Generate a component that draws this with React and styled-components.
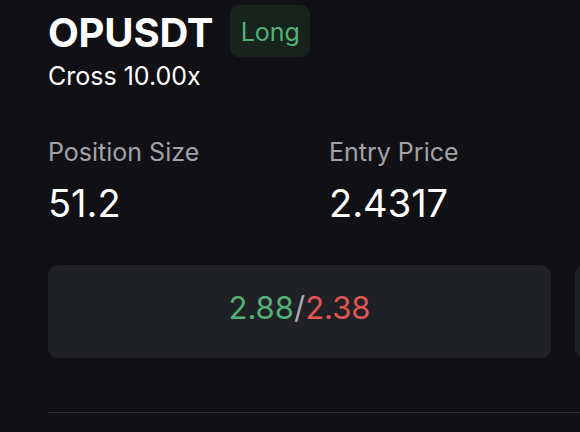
import React from "react"
import styled, { createGlobalStyle } from "styled-components"

const GlobalStyle = createGlobalStyle`
  html, body {
    margin: 0;
    padding: 0;
    background: #111115;
    overflow: hidden;
  }
  body {
    font-family: "Inter", "Noto Sans", sans-serif;
    color: #ffffff;
  }
`

const Page = styled.div`
  width: 580px;
  height: 432px;
  padding: 5px 0 0 48px;
  box-sizing: border-box;
  overflow: hidden;
`

const Header = styled.div`
  display: flex;
  align-items: center;
  gap: 17px;
`

const Symbol = styled.h1`
  margin: 0;
  padding-top: 3px;
  font-size: 40px;
  font-weight: 700;
  letter-spacing: -0.2px;
  line-height: 49px;
`

const SideBadge = styled.span`
  display: flex;
  align-items: center;
  justify-content: center;
  width: 80px;
  height: 52px;
  padding-top: 2px;
  box-sizing: border-box;
  border-radius: 9px;
  background: #17241d;
  color: ${({ long }) => (long ? "#55b077" : "#e05555")};
  font-size: 25px;
  font-weight: 400;
`

const Leverage = styled.div`
  margin-top: 4px;
  font-size: 25px;
  line-height: 30px;
`

const Stats = styled.div`
  display: grid;
  grid-template-columns: 281px 281px;
  margin-top: 46px;
`

const Stat = styled.div`
  display: flex;
  flex-direction: column;
  gap: 14px;
`

const Label = styled.span`
  font-size: 25px;
  line-height: 30px;
  color: #a1a2a7;
`

const Value = styled.span`
  font-size: 38px;
  line-height: 44px;
`

const Actions = styled.div`
  display: flex;
  gap: 24px;
  margin-top: 40px;
`

const ActionBox = styled.div`
  flex: 0 0 503px;
  height: 93px;
  padding-bottom: 8px;
  box-sizing: border-box;
  border-radius: 10px;
  background: #202125;
  display: flex;
  align-items: center;
  justify-content: center;
  font-size: 31px;
`

const Price = styled.span`
  color: ${({ tone }) =>
    tone === "up" ? "#55b077" : tone === "down" ? "#e05555" : "#a7a8ad"};
`

const Divider = styled.div`
  margin-top: 54px;
  height: 1px;
  background: #2a2b2f;
`

export default function App() {
  return (
    <Page>
      <GlobalStyle />
      <Header>
        <Symbol>OPUSDT</Symbol>
        <SideBadge long>Long</SideBadge>
      </Header>
      <Leverage>Cross 10.00x</Leverage>
      <Stats>
        <Stat>
          <Label>Position Size</Label>
          <Value>51.2</Value>
        </Stat>
        <Stat>
          <Label>Entry Price</Label>
          <Value>2.4317</Value>
        </Stat>
      </Stats>
      <Actions>
        <ActionBox>
          <Price tone="up">2.88</Price>
          <Price>/</Price>
          <Price tone="down">2.38</Price>
        </ActionBox>
        <ActionBox />
      </Actions>
      <Divider />
    </Page>
  )
}
